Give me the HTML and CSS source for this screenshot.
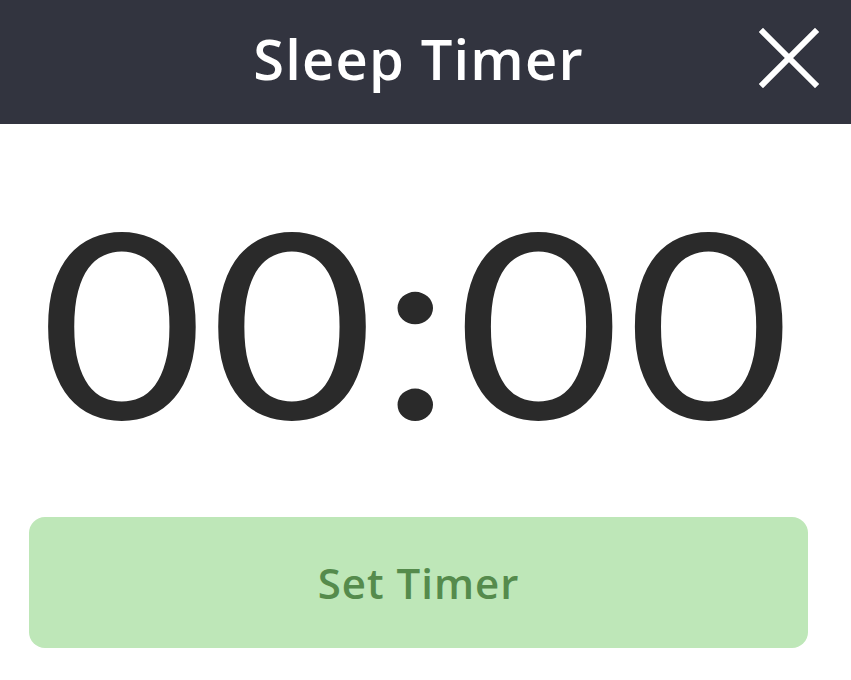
FILE: index.html
```html
<!DOCTYPE html>
<html lang="en">
<head>
  <meta charset="UTF-8">
  <meta name="viewport" content="width=device-width, initial-scale=1.0">
  <title>Sleep Timer</title>
  <link rel="stylesheet" href="styles.css">
</head>
<body>
  <header class="top-bar">
    <h1>Sleep Timer</h1>
    <button class="close-btn" aria-label="Close">
      <svg viewBox="0 0 60 60" width="60" height="60">
        <path d="M4 4 L56 56 M56 4 L4 56" stroke="#fff" stroke-width="6" stroke-linecap="square" fill="none"/>
      </svg>
    </button>
  </header>

  <section class="clock">
    <span class="time">00:00</span>
  </section>

  <div class="actions">
    <button class="set-btn">Set Timer</button>
  </div>
</body>
</html>
```

FILE: styles.css
```css
body {
  margin: 0;
  font-family: 'Open Sans', 'Liberation Sans', sans-serif;
  background: #ffffff;
  color: #2a2a2a;
}

.top-bar {
  background: #32343f;
  height: 124px;
  padding: 0 14px 8px 0;
  box-sizing: border-box;
  display: flex;
  align-items: center;
  justify-content: center;
  position: relative;
}

.top-bar h1 {
  margin: 0;
  color: #fff;
  font-size: 56px;
  font-weight: 600;
  letter-spacing: 1.2px;
}

.close-btn {
  position: absolute;
  right: 32px;
  top: 28px;
  background: none;
  border: none;
  padding: 0;
  cursor: pointer;
}

.clock {
  height: 390px;
  padding: 0 14px 0 0;
  display: flex;
  align-items: center;
  justify-content: center;
}

.time {
  font-family: 'Lato', sans-serif;
  font-size: 258px;
  font-weight: 400;
  line-height: 1;
  color: #2a2a2a;
  display: inline-block;
  transform: scaleX(1.1);
  letter-spacing: 5px;
}

.actions {
  padding: 3px 43px 0 29px;
}

.set-btn {
  display: block;
  width: 100%;
  height: 131px;
  border: none;
  border-radius: 16px;
  background: #bee7b8;
  color: #558b4c;
  font-family: 'Open Sans', sans-serif;
  font-size: 42px;
  font-weight: 600;
  letter-spacing: 1px;
  cursor: pointer;
}
```
